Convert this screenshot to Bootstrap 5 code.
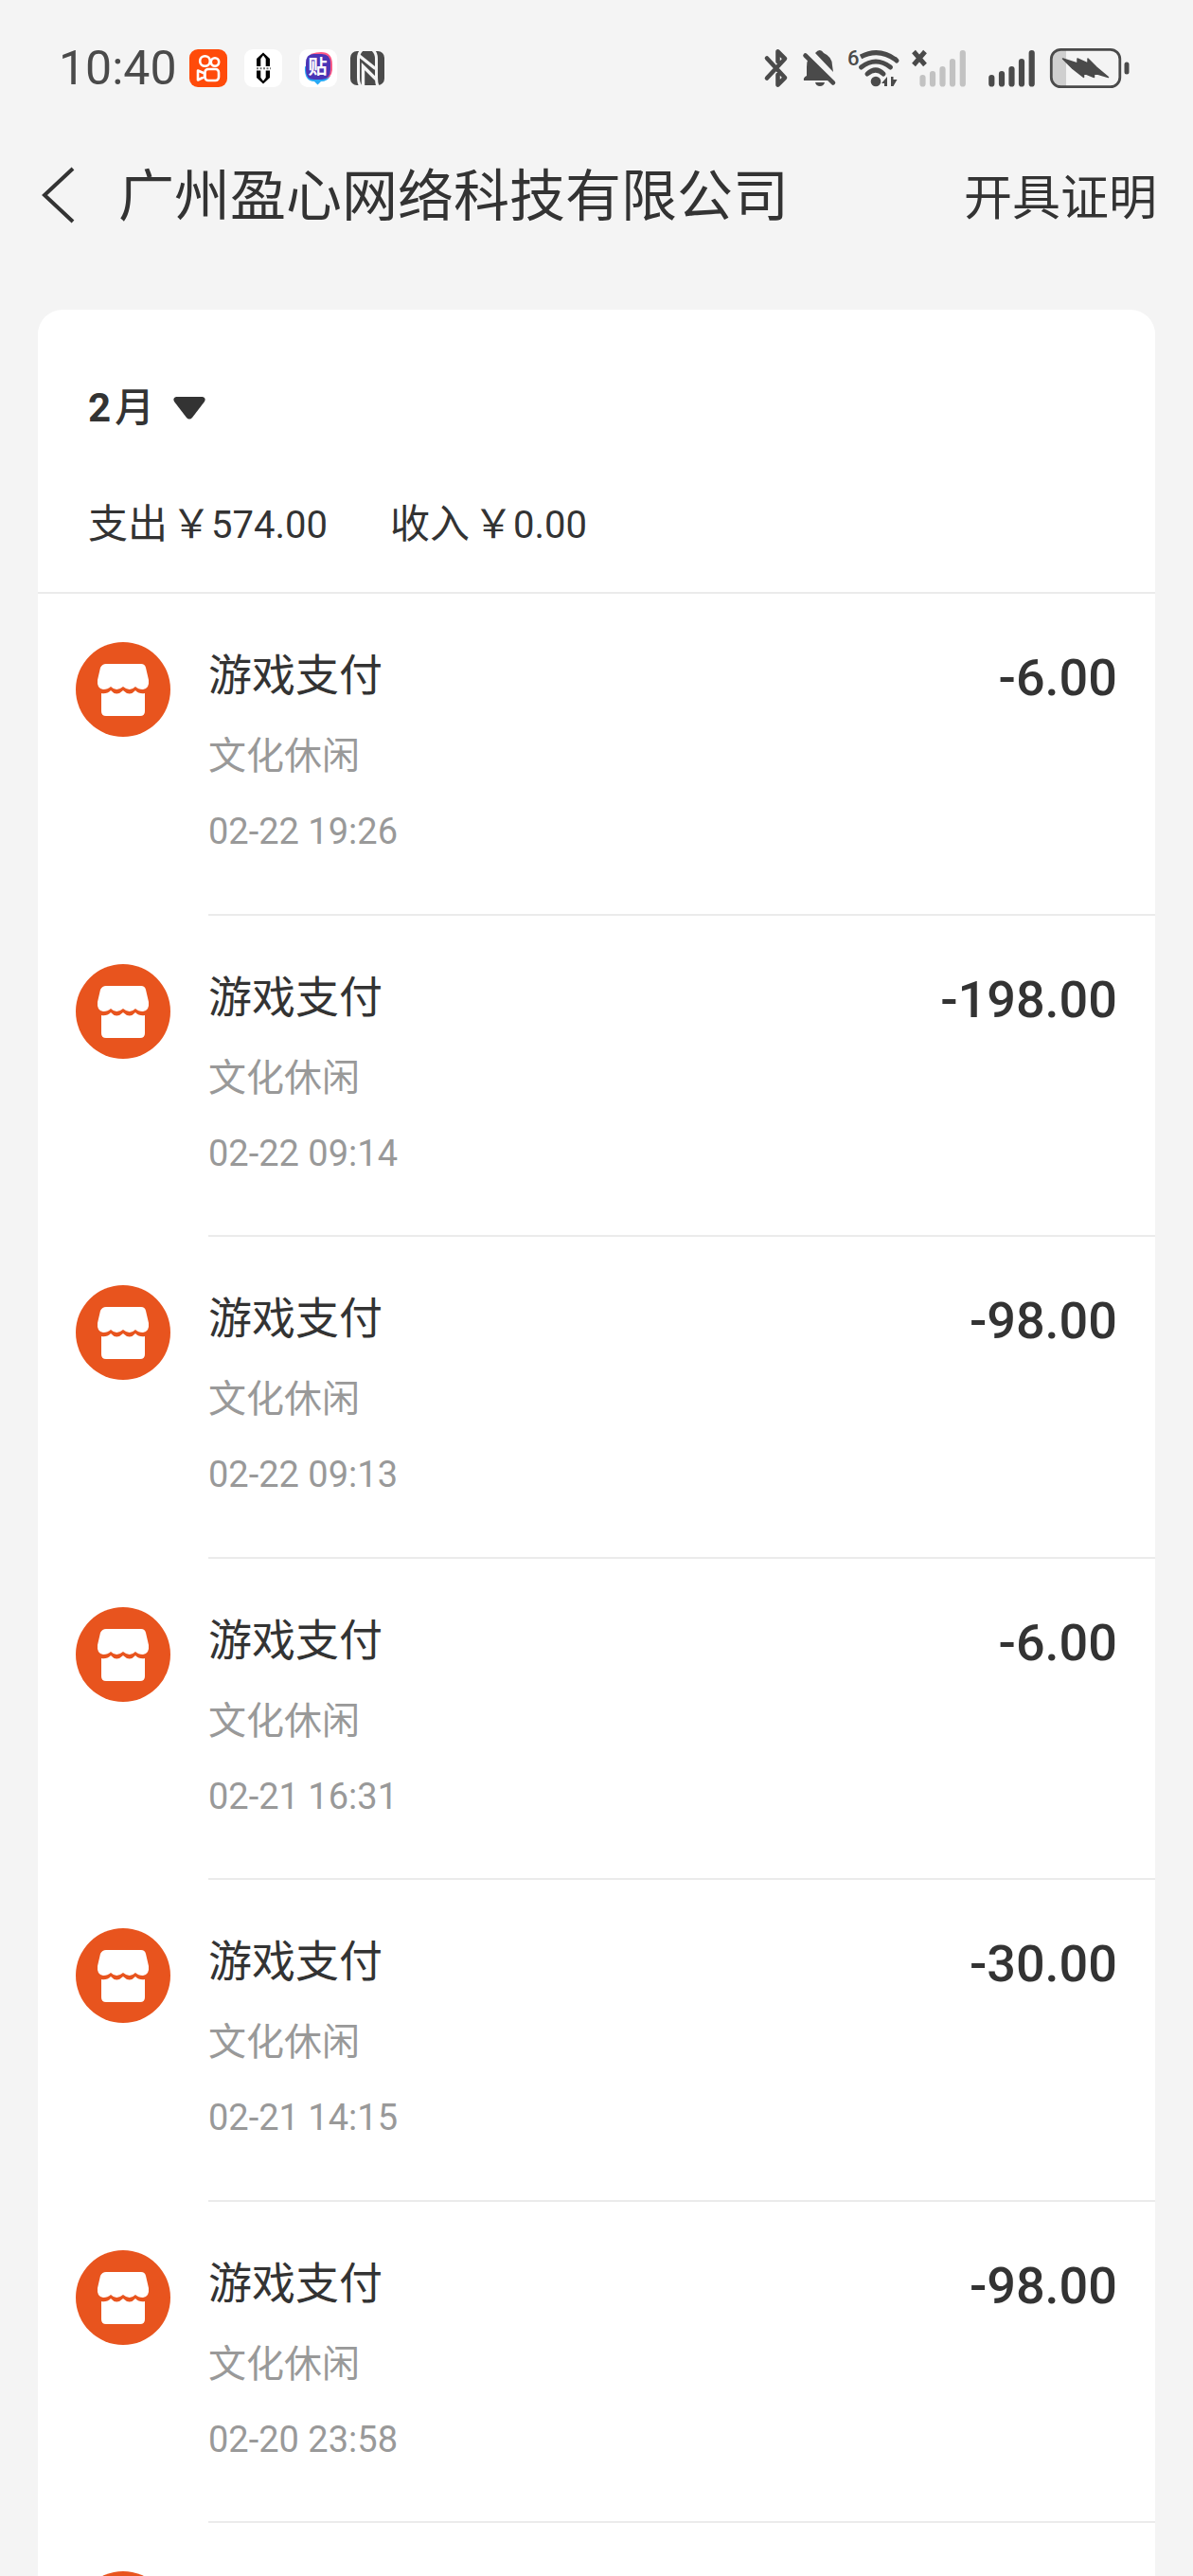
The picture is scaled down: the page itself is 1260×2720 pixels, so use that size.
<!DOCTYPE html>
<html lang="zh-CN">
<head>
<meta charset="utf-8">
<meta name="viewport" content="width=device-width, initial-scale=1">
<title>广州盈心网络科技有限公司</title>
<link rel="stylesheet" href="https://cdn.jsdelivr.net/npm/bootstrap@5.3.0/dist/css/bootstrap.min.css">
<style>
  :root { --ink: #333; --muted: #999; --page: #f4f4f4; --status: #4a4a4a; --line: #ebebeb; }
  body { background: var(--page); color: var(--ink); font-family: "Noto Sans CJK SC", sans-serif; }
  .num { font-family: Roboto, "Noto Sans CJK SC", sans-serif; }
  .status-bar { height: 144px; padding: 0 67px 0 62px; color: var(--status); }
  .status-bar svg { height: 44px; flex: none; overflow: visible; }
  .clock { font-size: 50px; line-height: 60px; width: 136px; }
  .apps { gap: 14px; }
  .signals { gap: 10px; }
  .title-bar { height: 122px; padding: 0 38px 0 41px; }
  .title-bar h1 { font-size: 59px; line-height: 84px; font-weight: 400; padding-bottom: 4px; }
  .back-btn { width: 84px; height: 88px; }
  .proof-link { font-size: 51px; line-height: 88px; color: var(--ink); }
  .bill { margin: 61px 40px 0; border-radius: 26px 26px 0 0; }
  .summary { padding: 62px 53px 37px; border-bottom: 2px solid var(--line); }
  .summary .num { line-height: 1; }
  .month-btn { font-size: 42px; line-height: 76px; font-weight: 500; color: var(--ink); gap: 20px; }
  .month-btn .num { font-size: 42px; font-weight: 700; margin-right: 4px; }
  .totals { font-size: 42px; line-height: 76px; margin-top: 47px; gap: 66px; }
  .totals .num { font-size: 40px; }
  .yen { margin-left: 4px; }
  .entry { padding-left: 40px; gap: 40px; }
  .entry-icon { width: 100px; height: 100px; margin-top: 51px; flex: none; }
  .entry-main { padding: 38px 40px 46px 0; border-bottom: 2px solid var(--line); }
  .entry:nth-child(even) .entry-main { padding-bottom: 45px; }
  .entry-name { font-size: 46px; line-height: 88px; }
  .entry-kind { font-size: 40px; line-height: 84px; color: var(--muted); }
  .entry-time { font-size: 38px; line-height: 82px; color: var(--muted); }
  .entry-sum { font-size: 54px; line-height: 102px; font-weight: 500; }
</style>
<script src="https://cdn.jsdelivr.net/npm/bootstrap@5.3.0/dist/js/bootstrap.bundle.min.js"></script>
</head>
<body>
<svg class="d-none" aria-hidden="true">
  <symbol id="shop" viewBox="0 0 100 100">
    <circle cx="50" cy="50" r="50" fill="#e8541e"/>
    <path fill="#fff" d="M32 23H69Q73 23 74 27L77 40Q78 49 71 50Q66 50 63 47Q57 53 50 47Q43 53 37 47Q34 50 29 50Q22 49 23 40L26 27Q28 23 32 23Z"/>
    <path fill="#fff" d="M27 54Q33 55 37 51Q43 58 50 51Q57 58 63 51Q67 55 73 54V73Q73 78 68 78H32Q27 78 27 73Z"/>
  </symbol>
</svg>

<div class="vh-100 overflow-hidden d-flex flex-column">
  <div class="status-bar d-flex align-items-center justify-content-between flex-shrink-0">
    <div class="d-flex align-items-center">
      <span class="clock num">10:40</span>
      <div class="apps d-flex align-items-center">
        <svg width="44" viewBox="198 50 44 44" aria-hidden="true">
          <rect x="200" y="52" width="40" height="40" rx="9" fill="#ff4b0a"/>
          <g fill="none" stroke="#fff" stroke-width="2.6" stroke-linejoin="round">
            <circle cx="216.500" cy="64.500" r="5.300"/><circle cx="227" cy="65.500" r="4.200"/>
            <rect x="216.500" y="73" width="14.500" height="12" rx="3.500"/>
            <path d="M209 74.500L216 77.500V81L209 84.500Z"/>
          </g>
        </svg>
        <svg width="44" viewBox="256 50 44 44" aria-hidden="true">
          <rect x="258" y="52" width="40" height="40" rx="9" fill="#fff"/>
          <path fill="#000" fill-rule="evenodd" d="M278 55.500L285 62V82L278 88.500L271 82V62ZM278 58.500L275.300 62V82L278 85.500L280.700 82V62Z"/>
          <path fill="#fff" d="M270 70H287V74.500H270Z"/>
          <path stroke="#777" stroke-width="2" stroke-dasharray="2 1.500" d="M271 72.200H286"/>
        </svg>
        <svg width="42" viewBox="314 50 42 44" aria-hidden="true">
          <rect x="316" y="52" width="40" height="40" rx="9" fill="#fff"/>
          <path fill="#27a8f5" d="M322 70Q321 86 332 86L335.500 89.500L339 86Q346 86 349 80Z"/>
          <path fill="#ff5a86" d="M328 57Q351 50 351 68Q352 81 345 83Z"/>
          <path fill="#4b35b5" d="M331 57H340Q349 57 349 67V73Q349 84 340 84H332Q323 84 323 74V67Q323 57 331 57Z"/>
          <text x="335.500" y="78" text-anchor="middle" font-size="20" font-weight="700" fill="#fff">贴</text>
        </svg>
        <svg width="36" viewBox="370 50 36 44" aria-hidden="true">
          <rect x="370" y="54" width="36" height="36" rx="7" fill="#4a4a4a"/>
          <g fill="none" stroke="#f4f4f4">
            <path stroke-width="3" d="M382 53Q378.500 56 378.500 62V82Q378.500 88 381 91M394 53Q397.500 56 397.500 62V82Q397.500 88 399 91"/>
            <path stroke-width="3.400" d="M379 58.500L396.500 72.500M383.500 91V70L397.500 84"/>
          </g>
        </svg>
      </div>
    </div>
    <div class="signals d-flex align-items-center">
      <svg width="30" viewBox="806 50 30 44" aria-hidden="true">
        <path fill="none" stroke="currentColor" stroke-width="4.600" stroke-linecap="round" stroke-linejoin="round" d="M810 61.500L829 82L821.500 89.500V79M810 82.500L829 62L821.500 54.500V65"/>
      </svg>
      <svg width="38" viewBox="846 50 38 44" aria-hidden="true">
        <path fill="currentColor" d="M861 56Q866 50 870 56Q879 60 879 69L880 76Z"/>
        <path fill="currentColor" d="M854 61L876 85H849Q848 82 852 80V71Q852 65 854 61ZM861 87H871Q870 91 866 91Q862 91 861 87Z"/>
        <path stroke="currentColor" stroke-width="4.600" stroke-linecap="round" d="M850.500 58.500L880 87.500"/>
      </svg>
      <svg width="57" viewBox="894 50 57 44" aria-hidden="true">
        <text class="num" x="895" y="69" font-size="22" font-weight="500" fill="currentColor">6</text>
        <g fill="none" stroke="currentColor" stroke-width="5" stroke-linecap="round">
          <path stroke-linecap="butt" d="M909 60Q928 50 946 63"/><path d="M946 63L947 64"/>
          <path d="M909.500 71Q925 59 940.500 71"/><path d="M916 78Q925 70 933 78"/>
        </g>
        <circle cx="925" cy="86" r="5.300" fill="currentColor"/>
        <path fill="currentColor" d="M937 81V91H934V88H931ZM941 81H943.500V91H941ZM943.500 84H947.500L943.500 91Z"/>
      </svg>
      <svg width="62" viewBox="961 50 62 44" aria-hidden="true">
        <path stroke="currentColor" stroke-width="5" d="M965 54.500L977 68.500M977 54.500L965 68.500"/>
        <path stroke="#c2c2c2" stroke-width="6.200" stroke-linecap="round" d="M974.500 82V88.500M985 78V88.500M995.500 73V88.500M1006 65V88.500M1016.800 56V88.500"/>
      </svg>
      <svg width="62" viewBox="1033 50 62 44" aria-hidden="true">
        <path stroke="currentColor" stroke-width="6.200" stroke-linecap="round" d="M1047.300 82V88.500M1058 78V88.500M1068.500 73V88.500M1079 65V88.500M1089.700 56V88.500"/>
      </svg>
      <svg width="88" viewBox="1105 50 88 44" aria-hidden="true">
        <path fill="#cfcfcf" d="M1120 52H1126V92H1120Q1111 92 1111 83V61Q1111 52 1120 52Z"/>
        <rect x="1110.300" y="52.300" width="72.500" height="39.400" rx="10" fill="none" stroke="currentColor" stroke-width="2.800"/>
        <rect x="1187.500" y="65.500" width="5" height="13" rx="2.500" fill="currentColor"/>
        <path fill="currentColor" stroke="currentColor" stroke-width="1.500" stroke-linejoin="round" d="M1122.500 62L1138 67V62L1149 67V62L1158 71L1170.500 81.500L1155.500 77V81.500L1144.500 77V81.500L1133 72.500Z"/>
      </svg>
    </div>
  </div>

  <header class="title-bar d-flex align-items-center justify-content-between flex-shrink-0">
    <div class="d-flex align-items-center">
      <button type="button" class="back-btn btn p-0 border-0 d-flex align-items-center" aria-label="返回">
        <svg width="40" height="62" viewBox="0 0 40 62" fill="none" stroke="#333" stroke-width="4"><path d="M36 4L6 32L36 60"/></svg>
      </button>
      <h1 class="m-0 text-nowrap">广州盈心网络科技有限公司</h1>
    </div>
    <a class="proof-link text-decoration-none text-nowrap" href="#">开具证明</a>
  </header>

  <main class="bill bg-white flex-grow-1 flex-shrink-0">
    <section class="summary">
      <button type="button" class="month-btn btn p-0 border-0 d-flex align-items-center">
        <span><span class="num">2</span>月</span>
        <svg class="mt-2" width="34" height="24" viewBox="0 0 34 24" aria-hidden="true"><path fill="#333" d="M3 0H31Q35 1 33 5L20 22Q17 25 14 22L1 5Q-1 1 3 0Z"/></svg>
      </button>
      <div class="totals d-flex">
        <span>支出<span class="yen">￥</span><span class="num">574.00</span></span>
        <span>收入<span class="yen">￥</span><span class="num">0.00</span></span>
      </div>
    </section>
    <ul class="list-unstyled m-0">
      <li class="entry d-flex">
        <svg class="entry-icon" aria-hidden="true"><use href="#shop"/></svg>
        <div class="entry-main flex-grow-1 d-flex justify-content-between">
          <div><div class="entry-name">游戏支付</div><div class="entry-kind">文化休闲</div><div class="entry-time num">02-22 19:26</div></div>
          <div class="entry-sum num">-6.00</div>
        </div>
      </li>
      <li class="entry d-flex">
        <svg class="entry-icon" aria-hidden="true"><use href="#shop"/></svg>
        <div class="entry-main flex-grow-1 d-flex justify-content-between">
          <div><div class="entry-name">游戏支付</div><div class="entry-kind">文化休闲</div><div class="entry-time num">02-22 09:14</div></div>
          <div class="entry-sum num">-198.00</div>
        </div>
      </li>
      <li class="entry d-flex">
        <svg class="entry-icon" aria-hidden="true"><use href="#shop"/></svg>
        <div class="entry-main flex-grow-1 d-flex justify-content-between">
          <div><div class="entry-name">游戏支付</div><div class="entry-kind">文化休闲</div><div class="entry-time num">02-22 09:13</div></div>
          <div class="entry-sum num">-98.00</div>
        </div>
      </li>
      <li class="entry d-flex">
        <svg class="entry-icon" aria-hidden="true"><use href="#shop"/></svg>
        <div class="entry-main flex-grow-1 d-flex justify-content-between">
          <div><div class="entry-name">游戏支付</div><div class="entry-kind">文化休闲</div><div class="entry-time num">02-21 16:31</div></div>
          <div class="entry-sum num">-6.00</div>
        </div>
      </li>
      <li class="entry d-flex">
        <svg class="entry-icon" aria-hidden="true"><use href="#shop"/></svg>
        <div class="entry-main flex-grow-1 d-flex justify-content-between">
          <div><div class="entry-name">游戏支付</div><div class="entry-kind">文化休闲</div><div class="entry-time num">02-21 14:15</div></div>
          <div class="entry-sum num">-30.00</div>
        </div>
      </li>
      <li class="entry d-flex">
        <svg class="entry-icon" aria-hidden="true"><use href="#shop"/></svg>
        <div class="entry-main flex-grow-1 d-flex justify-content-between">
          <div><div class="entry-name">游戏支付</div><div class="entry-kind">文化休闲</div><div class="entry-time num">02-20 23:58</div></div>
          <div class="entry-sum num">-98.00</div>
        </div>
      </li>
      <li class="entry d-flex">
        <svg class="entry-icon" aria-hidden="true"><use href="#shop"/></svg>
      </li>
    </ul>
  </main>
</div>
</body>
</html>
